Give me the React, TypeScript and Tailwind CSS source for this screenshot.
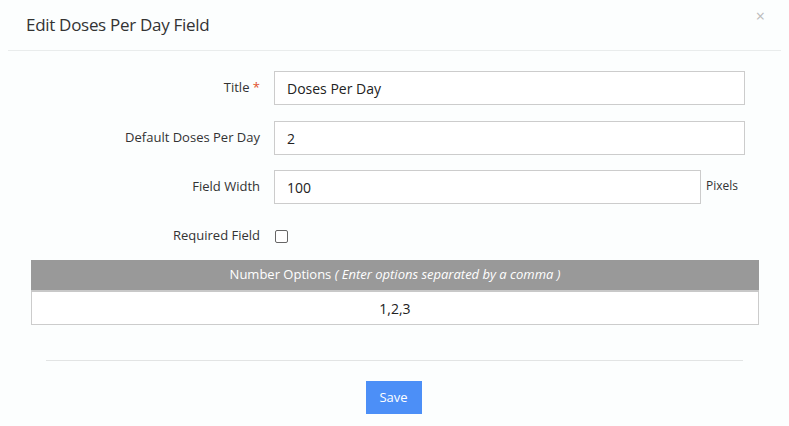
export default function App() {
  const f = { fontFamily: '"Open Sans", sans-serif' };
  const label = "w-[274px] pr-[14px] text-right text-[13px] text-[#333] shrink-0";
  const input = "h-[34px] border border-[#ccc] bg-white px-[12px] flex items-center text-[14px] text-[#222]";
  return (
    <div style={f} className="w-[789px] h-[426px] bg-[#fcfefe] relative">
      <div className="h-[51px] mx-[8px] border-b border-[#e9ecec] flex items-center pl-[18px]">
        <span className="text-[17px] text-[#333] tracking-[-0.3px]">Edit Doses Per Day Field</span>
      </div>
      <span className="absolute right-[24px] top-[4px] text-[#bbb] text-[16px]">×</span>
      <div className="pt-[20px] flex flex-col gap-[16px]">
        <div className="flex items-center">
          <div className={label}>Title <span className="text-[#e0502b]">*</span></div>
          <div className={input + " w-[471px]"}>Doses Per Day</div>
        </div>
        <div className="flex items-center">
          <div className={label}>Default Doses Per Day</div>
          <div className={input + " w-[471px]"}>2</div>
        </div>
        <div className="flex items-center -mt-[1px]">
          <div className={label}>Field Width</div>
          <div className={input + " w-[427px]"}>100</div>
          <span className="ml-[5px] text-[12px] text-[#333] -mt-[3px]">Pixels</span>
        </div>
        <div className="flex items-center h-[32px]">
          <div className={label}>Required Field</div>
          <div className="w-[13px] h-[13px] border border-[#666] rounded-[2px] bg-white ml-[1px]" />
        </div>
      </div>
      <div className="mx-[31px] mt-[8px] w-[728px]">
        <div className="h-[32px] bg-[#999] text-white text-[13px] flex items-center justify-center border-b-2 border-[#c8c8c8]">
          Number Options&nbsp;<i>( Enter options separated by a comma )</i>
        </div>
        <div className="h-[33px] bg-white border border-t-0 border-[#ccc] flex items-center justify-center text-[14px] text-[#222]">1,2,3</div>
      </div>
      <div className="mx-[46px] mt-[35px] border-t border-[#e2e4e4]" />
      <div className="flex justify-center mt-[20px]">
        <div className="w-[56px] h-[33px] bg-[#4c8ff7] text-white text-[13px] flex items-center justify-center ml-[-2px]">Save</div>
      </div>
    </div>
  );
}
